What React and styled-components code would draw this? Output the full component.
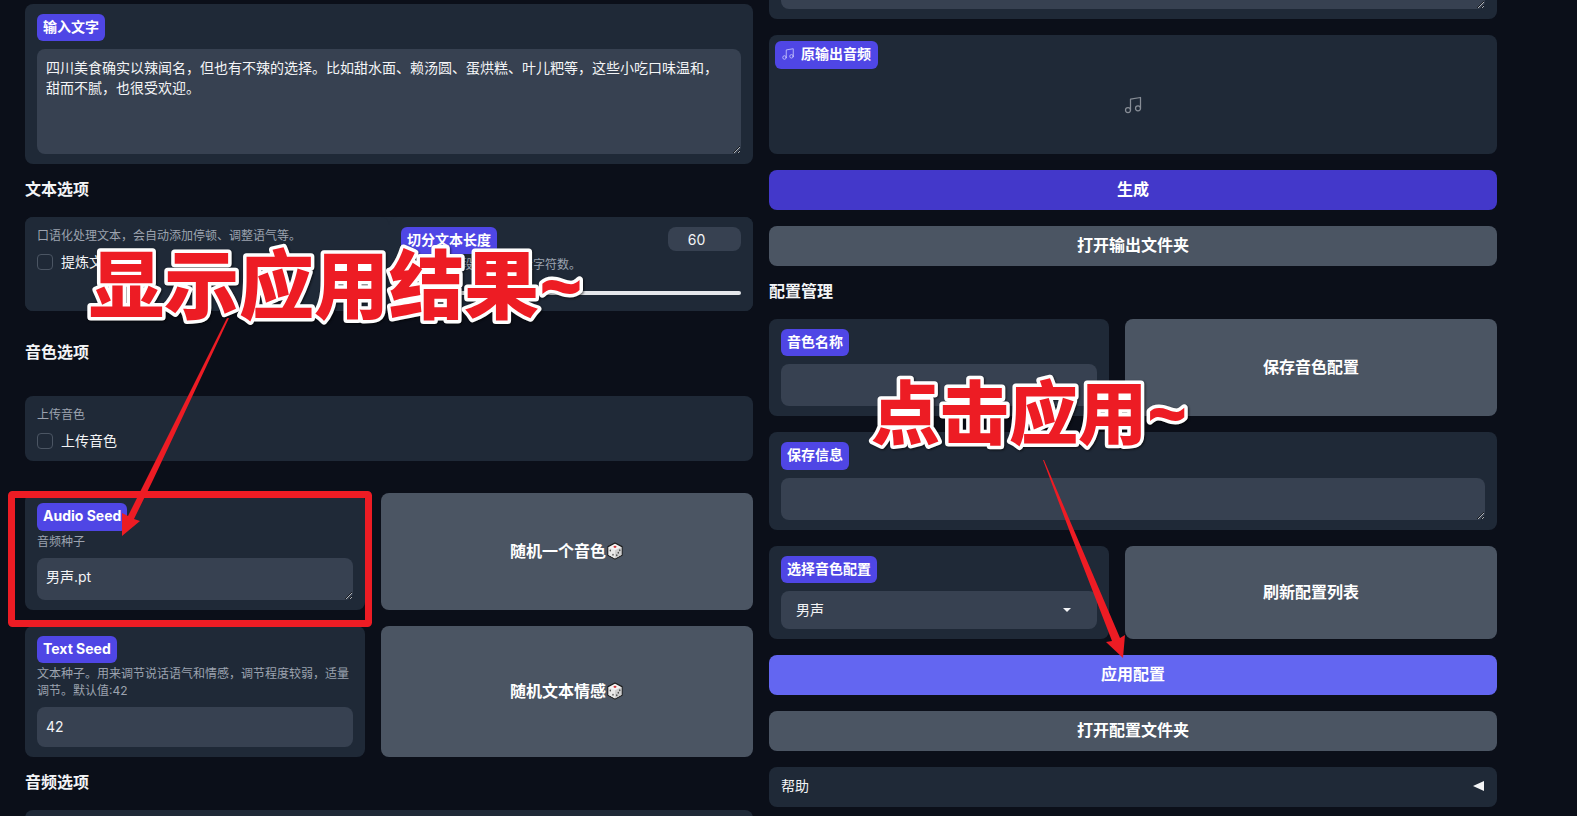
import React, { Component } from 'react'
import styled, { createGlobalStyle } from 'styled-components'

const GlobalStyle = createGlobalStyle`
  * { box-sizing: border-box; }

  body {
    margin: 0;
    background: #0b0f19;
    color: #f3f4f6;
    font-family: Inter, 'Noto Sans CJK SC', sans-serif;
    font-size: 14px;
    line-height: 20px;
  }

  button, input, textarea, select { font-family: inherit; }
`

const Page = styled.main`
  position: relative;
  display: grid;
  grid-template-columns: 1fr 1fr;
  gap: 16px;
  height: 100vh;
  padding: 0 80px 0 25px;
  overflow: hidden;
`

const Column = styled.section`
  display: flex;
  flex-direction: column;
  gap: 16px;
  min-width: 0;
  padding-top: ${props => props.$top || 0}px;

  > * { flex-shrink: 0; }
`

const Heading = styled.h3`
  margin: ${props => (props.$spaced ? '16px 0' : '0')};
  padding-bottom: 2px;
  font-size: 16px;
  font-weight: 700;
  line-height: 19px;
`

const Card = styled.div`
  display: flex;
  flex-direction: column;
  align-items: flex-start;
  min-width: 0;
  padding: 10px 12px;
  border-radius: 8px;
  background: #1f2937;
`

const CutCard = styled(Card)`
  padding-top: 0;
  border-radius: 0 0 8px 8px;
`

const NextCard = styled(Card)`
  height: 60px;
`

const SplitCard = styled.div`
  display: grid;
  grid-template-columns: 1fr 1fr;
  border-radius: 8px;
  background: #1f2937;
`

const Row = styled.div`
  display: grid;
  grid-template-columns: 340fr 372fr;
  gap: 16px;
  margin-top: ${props => (props.$spaced ? '16px' : '0')};
`

const Tag = styled.label`
  padding: 0 6px ${props => (props.$tall ? '3px' : '2px')};
  border-radius: 6px;
  background: #4f46e5;
  color: #fff;
  font-weight: 700;
  line-height: 25px;
`

const AudioTag = styled.span`
  display: flex;
  align-items: center;
  gap: 6px;
  padding: 0 7px 2px 6px;
  border-radius: 6px;
  background: #4f46e5;
  color: #fff;
  font-weight: 700;
  line-height: 26px;

  svg { color: #c4c1fa; }
`

const Info = styled.p`
  margin: ${props => (props.$first ? '0' : '2px')} 0 8px;
  color: #9ca3af;
  font-size: 12px;
  line-height: 17px;
`

const field = `
  display: block;
  width: 100%;
  border: 0;
  border-radius: 8px;
  background: #374151;
  color: #f3f4f6;
  font-size: 14px;
  line-height: 20px;
  outline: none;
`

const TextArea = styled.textarea`
  ${field}
  height: ${props => props.$height}px;
  margin-top: ${props => (props.$afterTag ? '8px' : '0')};
  padding: 9px 12px 9px 9px;
`

const CutTextArea = styled(TextArea)`
  padding: 0;
  border-radius: 0 0 8px 8px;
`

const NumberBox = styled.input`
  ${field}
  height: 40px;
  padding: 8px 9px 10px;
`

const CheckLabel = styled.label`
  display: flex;
  align-items: center;
  gap: 8px;
  height: 20px;
`

const CheckBox = styled.input`
  appearance: none;
  width: 16px;
  height: 16px;
  margin: 0;
  border: 1px solid #4b5563;
  border-radius: 4px;
  background: #1f2937;

  &:checked { background: #4f46e5; }
`

const SliderHead = styled.div`
  display: flex;
  align-items: flex-start;
  justify-content: space-between;
  width: 100%;
`

const SliderNumber = styled.input`
  ${field}
  width: 73px;
  height: 24px;
  padding: 0 16px 0 0;
  text-align: center;
`

const Slider = styled.input`
  appearance: none;
  width: 100%;
  height: 16px;
  margin: 4px 0 0;
  background: transparent;

  &::-webkit-slider-runnable-track {
    height: 4px;
    border-radius: 2px;
    background: #e5e7eb;
  }

  &::-webkit-slider-thumb {
    appearance: none;
    width: 12px;
    height: 12px;
    margin-top: -4px;
    border-radius: 50%;
    background: #fff;
  }
`

const buttonColors = {
  secondary: '#4b5563',
  primary: '#4338ca',
  hover: '#6366f1'
}

const Button = styled.button`
  display: flex;
  align-items: center;
  justify-content: center;
  min-height: 40px;
  padding: 0 12px 2px;
  border: 0;
  border-radius: 8px;
  background: ${props => buttonColors[props.$kind || 'secondary']};
  color: #fff;
  font-size: 16px;
  font-weight: 700;
  line-height: 20px;
  cursor: pointer;
`

const AudioCard = styled(Card)`
  height: 119px;
  padding: 6px;
`

const EmptyAudio = styled.div`
  display: flex;
  flex: 1;
  align-items: center;
  justify-content: center;
  width: 100%;
  padding-bottom: 8px;
  color: #878d96;
`

const SelectWrap = styled.div`
  display: grid;
  align-items: center;
  width: 100%;
  margin-top: 8px;

  > * { grid-area: 1 / 1; }

  svg {
    justify-self: end;
    margin-right: 26px;
    pointer-events: none;
  }
`

const Select = styled.select`
  ${field}
  appearance: none;
  height: 38px;
  padding: 0 15px;
`

const Accordion = styled.button`
  display: flex;
  align-items: center;
  justify-content: space-between;
  height: 40px;
  padding: 0 13px 2px 12px;
  border: 0;
  border-radius: 8px;
  background: #1f2937;
  color: #f3f4f6;
  font-size: 14px;
  line-height: 20px;
`

const Marks = styled.svg`
  position: absolute;
  top: 0;
  left: 0;
  width: 100%;
  height: 100%;
  pointer-events: none;
`

const Callout = styled.text`
  fill: #ed1c24;
  stroke: #fff;
  stroke-width: 7px;
  stroke-linejoin: round;
  paint-order: stroke fill;
  font-family: 'Open Sans', 'Noto Sans CJK SC', sans-serif;
  font-size: ${props => props.$size}px;
  font-weight: 800;
  filter: drop-shadow(1px 1px 1px rgba(0, 0, 0, 0.6));
`

const MusicIcon = ({ size }) => (
  <svg width={size} height={size} viewBox='0 0 24 24' fill='none' stroke='currentColor' strokeWidth='1.5' strokeLinecap='round' strokeLinejoin='round'>
    <path d='M9 18V5l12-2v13' />
    <circle cx='6' cy='18' r='3' />
    <circle cx='18' cy='16' r='3' />
  </svg>
)

const DiceIcon = () => (
  <svg width='18' height='18' viewBox='0 0 18 18'>
    <path d='M9 1l7 3.6v8.6L9 17l-7-3.8V4.600z' fill='#f4f4f4' stroke='#1b1b1b' strokeWidth='1.2' strokeLinejoin='round' />
    <path d='M2.500 5L9 8.200V16.400L2.500 13z' fill='#e8e8e8' />
    <path d='M15.500 5L9 8.200V16.400L15.500 13z' fill='#cfcfcf' />
    <ellipse cx='9' cy='4.800' rx='1.500' ry='1.100' fill='#d13438' />
    <ellipse cx='4.300' cy='8.500' rx='.7' ry='1' fill='#444' />
    <ellipse cx='7' cy='12.700' rx='.7' ry='1' fill='#444' />
    <ellipse cx='13.800' cy='8.300' rx='.7' ry='1' fill='#444' />
    <ellipse cx='12.300' cy='10.800' rx='.7' ry='1' fill='#444' />
    <ellipse cx='10.800' cy='13.200' rx='.7' ry='1' fill='#444' />
  </svg>
)

class InputPanel extends Component {
  render () {
    return (
      <Column $top={4}>
        <Card>
          <Tag htmlFor='text'>输入文字</Tag>
          <TextArea
            id='text'
            $height={105}
            $afterTag
            defaultValue='四川美食确实以辣闻名，但也有不辣的选择。比如甜水面、赖汤圆、蛋烘糕、叶儿粑等，这些小吃口味温和，甜而不腻，也很受欢迎。'
          />
        </Card>
        <Heading>文本选项</Heading>
        <SplitCard>
          <Card>
            <Info $first>口语化处理文本，会自动添加停顿、调整语气等。</Info>
            <CheckLabel>
              <CheckBox type='checkbox' />
              提炼文本
            </CheckLabel>
          </Card>
          <Card>
            <SliderHead>
              <Tag htmlFor='length'>切分文本长度</Tag>
              <SliderNumber aria-label='切分文本长度' defaultValue='60' />
            </SliderHead>
            <Info>设置文本分段处理的最大字符数。</Info>
            <Slider id='length' type='range' min='0' max='600' defaultValue='60' />
          </Card>
        </SplitCard>
        <Heading $spaced>音色选项</Heading>
        <Card>
          <Info $first>上传音色</Info>
          <CheckLabel>
            <CheckBox type='checkbox' />
            上传音色
          </CheckLabel>
        </Card>
        <Row $spaced>
          <Card>
            <Tag htmlFor='audio-seed' $tall>Audio Seed</Tag>
            <Info>音频种子</Info>
            <TextArea id='audio-seed' $height={42} defaultValue='男声.pt' />
          </Card>
          <Button>随机一个音色<DiceIcon /></Button>
        </Row>
        <Row>
          <Card>
            <Tag htmlFor='text-seed'>Text Seed</Tag>
            <Info>文本种子。用来调节说话语气和情感，调节程度较弱，适量调节。默认值:42</Info>
            <NumberBox id='text-seed' defaultValue='42' />
          </Card>
          <Button>随机文本情感<DiceIcon /></Button>
        </Row>
        <Heading>音频选项</Heading>
        <NextCard />
      </Column>
    )
  }
}

class OutputPanel extends Component {
  render () {
    return (
      <Column>
        <CutCard>
          <CutTextArea aria-label='输出文字' $height={9} />
        </CutCard>
        <AudioCard>
          <AudioTag><MusicIcon size={14} />原输出音频</AudioTag>
          <EmptyAudio><MusicIcon size={20} /></EmptyAudio>
        </AudioCard>
        <Button $kind='primary'>生成</Button>
        <Button>打开输出文件夹</Button>
        <Heading>配置管理</Heading>
        <Row>
          <Card>
            <Tag htmlFor='voice-name'>音色名称</Tag>
            <TextArea id='voice-name' $height={42} $afterTag />
          </Card>
          <Button>保存音色配置</Button>
        </Row>
        <Card>
          <Tag htmlFor='save-info' $tall>保存信息</Tag>
          <TextArea id='save-info' $height={42} $afterTag />
        </Card>
        <Row>
          <Card>
            <Tag htmlFor='voice-config'>选择音色配置</Tag>
            <SelectWrap>
              <Select id='voice-config'>
                <option>男声</option>
              </Select>
              <svg width='8' height='4' viewBox='0 0 8 4'>
                <path d='M0 0h8L4 4z' fill='#f3f4f6' />
              </svg>
            </SelectWrap>
          </Card>
          <Button>刷新配置列表</Button>
        </Row>
        <Button $kind='hover'>应用配置</Button>
        <Button>打开配置文件夹</Button>
        <Accordion aria-expanded='false'>
          帮助
          <svg width='11' height='10' viewBox='0 0 11 10'>
            <path d='M11 0v10L0 5z' fill='#f3f4f6' />
          </svg>
        </Accordion>
      </Column>
    )
  }
}

const App = () => (
  <Page>
    <GlobalStyle />
    <InputPanel />
    <OutputPanel />
    <Marks>
      <rect x='11.500' y='494.500' width='357' height='129' rx='1' fill='none' stroke='#ed1c24' strokeWidth='7' strokeLinejoin='round' />
      <path d='M229 318L153 480L134 519L140 521L122 536V513L128 516L146 480L227 318z' fill='#ed1c24' />
      <path d='M1043 460L1071 535L1112 641L1106 642L1123 658L1125 635L1120 638L1076 535L1044 460z' fill='#ed1c24' />
      <Callout x='89' y='313' $size={75}>显示应用结果~</Callout>
      <Callout x='871' y='439' $size={69}>点击应用~</Callout>
    </Marks>
  </Page>
)

export default App
